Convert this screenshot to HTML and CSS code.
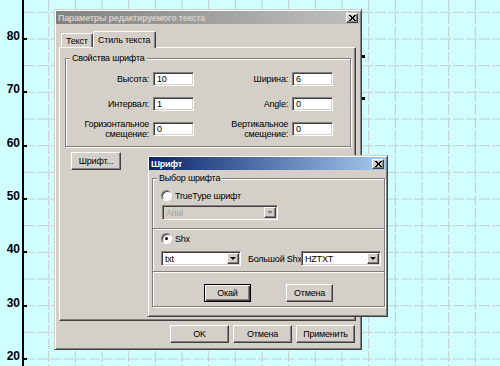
FILE: index.html
```
<!DOCTYPE html>
<html lang="ru">
<head>
    <meta charset="UTF-8">
    <title>Параметры редактируемого текста</title>
    <link rel="stylesheet" href="styles.css">
</head>
<body>

    <svg class="canvas" width="500" height="366">
        <g class="grid">
            <line x1="48.7" y1="0" x2="48.7" y2="366"/>
            <line x1="75.3" y1="0" x2="75.3" y2="366"/>
            <line x1="102" y1="0" x2="102" y2="366"/>
            <line x1="128.7" y1="0" x2="128.7" y2="366"/>
            <line x1="155.3" y1="0" x2="155.3" y2="366"/>
            <line x1="182" y1="0" x2="182" y2="366"/>
            <line x1="208.7" y1="0" x2="208.7" y2="366"/>
            <line x1="235.3" y1="0" x2="235.3" y2="366"/>
            <line x1="262" y1="0" x2="262" y2="366"/>
            <line x1="288.7" y1="0" x2="288.7" y2="366"/>
            <line x1="315.3" y1="0" x2="315.3" y2="366"/>
            <line x1="342" y1="0" x2="342" y2="366"/>
            <line x1="368.7" y1="0" x2="368.7" y2="366"/>
            <line x1="395.3" y1="0" x2="395.3" y2="366"/>
            <line x1="422" y1="0" x2="422" y2="366"/>
            <line x1="448.7" y1="0" x2="448.7" y2="366"/>
            <line x1="475.3" y1="0" x2="475.3" y2="366"/>
            <line x1="24" y1="12.3" x2="500" y2="12.3"/>
            <line x1="24" y1="39" x2="500" y2="39"/>
            <line x1="24" y1="65.7" x2="500" y2="65.7"/>
            <line x1="24" y1="92.3" x2="500" y2="92.3"/>
            <line x1="24" y1="119" x2="500" y2="119"/>
            <line x1="24" y1="145.7" x2="500" y2="145.7"/>
            <line x1="24" y1="172.3" x2="500" y2="172.3"/>
            <line x1="24" y1="199" x2="500" y2="199"/>
            <line x1="24" y1="225.7" x2="500" y2="225.7"/>
            <line x1="24" y1="252.3" x2="500" y2="252.3"/>
            <line x1="24" y1="279" x2="500" y2="279"/>
            <line x1="24" y1="305.7" x2="500" y2="305.7"/>
            <line x1="24" y1="332.3" x2="500" y2="332.3"/>
            <line x1="24" y1="359" x2="500" y2="359"/>
        </g>
        <rect class="axis" x="22" y="0" width="2" height="366"/>
        <g class="ticks">
            <rect x="24" y="38" width="3" height="2"/>
            <rect x="24" y="91" width="3" height="2"/>
            <rect x="24" y="145" width="3" height="2"/>
            <rect x="24" y="198" width="3" height="2"/>
            <rect x="24" y="251" width="3" height="2"/>
            <rect x="24" y="305" width="3" height="2"/>
            <rect x="24" y="358" width="3" height="2"/>
        </g>
        <g class="ylabels">
            <text x="20" y="40">80</text>
            <text x="20" y="93">70</text>
            <text x="20" y="147">60</text>
            <text x="20" y="200">50</text>
            <text x="20" y="253">40</text>
            <text x="20" y="307">30</text>
            <text x="20" y="360">20</text>
        </g>
        <rect x="362" y="55" width="3" height="3"/>
        <rect x="362" y="97" width="3" height="3"/>
    </svg>

    <div class="win main-win">
        <div class="titlebar inactive">
            <span class="title">Параметры редактируемого текста</span>
            <span class="close">
                <svg width="7" height="6" viewBox="0 0 7 6"><path d="M0 0 L6 6 M1 0 L7 6 M6 0 L0 6 M7 0 L1 6"/></svg>
            </span>
        </div>
        <div class="win-body">
            <div class="tabs">
                <div class="tab">Текст</div>
                <div class="tab active">Стиль текста</div>
            </div>
            <div class="panel">
                <div class="group props">
                    <div class="group-label">Свойства шрифта</div>
                    <div class="field-grid">
                        <label>Высота:</label><div class="edit">10</div>
                        <label>Ширина:</label><div class="edit">6</div>
                        <label>Интервал:</label><div class="edit">1</div>
                        <label>Angle:</label><div class="edit">0</div>
                        <label class="two-line">Горизонтальное<br>смещение:</label><div class="edit">0</div>
                        <label class="two-line">Вертикальное<br>смещение:</label><div class="edit">0</div>
                    </div>
                </div>
                <div class="btn font-btn">Шрифт...</div>
            </div>
            <div class="btn-row">
                <div class="btn">OK</div>
                <div class="btn">Отмена</div>
                <div class="btn">Применить</div>
            </div>
        </div>
    </div>

    <div class="win font-win">
        <div class="titlebar active">
            <span class="title">Шрифт</span>
            <span class="close">
                <svg width="7" height="6" viewBox="0 0 7 6"><path d="M0 0 L6 6 M1 0 L7 6 M6 0 L0 6 M7 0 L1 6"/></svg>
            </span>
        </div>
        <div class="font-body">
            <div class="group choose">
                <div class="group-label">Выбор шрифта</div>
                <div class="radio-row first">
                    <span class="radio"></span>TrueType шрифт
                </div>
                <div class="combo disabled wide">
                    <span class="combo-text">Arial</span>
                    <span class="drop"><span class="arrow"></span></span>
                </div>
                <div class="sep"></div>
                <div class="radio-row">
                    <span class="radio checked"></span>Shx
                </div>
                <div class="shx-row">
                    <div class="combo">
                        <span class="combo-text">txt</span>
                        <span class="drop"><span class="arrow"></span></span>
                    </div>
                    <span class="shx-label">Большой Shx</span>
                    <div class="combo">
                        <span class="combo-text">HZTXT</span>
                        <span class="drop"><span class="arrow"></span></span>
                    </div>
                </div>
                <div class="sep"></div>
                <div class="dlg-buttons">
                    <div class="btn default">Окай</div>
                    <div class="btn">Отмена</div>
                </div>
            </div>
        </div>
    </div>

</body>
</html>
```

FILE: styles.css
```
body {
    margin: 0;
    width: 500px;
    height: 366px;
    overflow: hidden;
    position: relative;
    background-color: #d0ffff;
    font-family: "Liberation Sans", Arial, sans-serif;
    font-size: 9px;
    letter-spacing: -0.2px;
    color: #000;
}
.canvas {
    position: absolute;
    left: 0;
    top: 0;
}
.grid line {
    stroke: #c4cccc;
    stroke-width: 1;
    stroke-dasharray: 11 2;
}
.ylabels text {
    font-family: "Liberation Sans", Arial, sans-serif;
    font-weight: bold;
    font-size: 12px;
    letter-spacing: 0;
    text-anchor: end;
}

/* classic windows */
.win {
    position: absolute;
    box-sizing: border-box;
    background: #d4d0c8;
    border: 1px solid;
    border-color: #d4d0c8 #404040 #404040 #d4d0c8;
    box-shadow: inset 1px 1px #fff, inset -1px -1px #808080;
    padding: 1px;
}
.main-win {
    left: 54px;
    top: 9px;
    width: 308px;
    height: 341px;
}
.font-win {
    left: 147px;
    top: 155px;
    width: 241px;
    height: 162px;
}
.titlebar {
    height: 13px;
    display: flex;
    align-items: center;
    justify-content: space-between;
    padding: 0 2px 0 2px;
}
.titlebar.inactive {
    background: linear-gradient(to right, #808080, #c0c0c0);
    color: #d4d0c8;
}
.titlebar.active {
    background: linear-gradient(to right, #0a246a, #a6caf0);
    color: #fff;
}
.title {
    font-weight: bold;
    font-size: 9px;
    letter-spacing: -0.3px;
    white-space: nowrap;
}
.close {
    width: 12px;
    height: 10px;
    box-sizing: border-box;
    background: #d4d0c8;
    border: 1px solid;
    border-color: #fff #404040 #404040 #fff;
    box-shadow: inset -1px -1px #808080;
    display: flex;
    align-items: center;
    justify-content: center;
}
.close path {
    stroke: #000;
    stroke-width: 1;
}

.btn {
    box-sizing: border-box;
    height: 18px;
    background: #d4d0c8;
    border: 1px solid;
    border-color: #fff #404040 #404040 #fff;
    box-shadow: inset -1px -1px #808080;
    display: flex;
    align-items: center;
    justify-content: center;
    white-space: nowrap;
}
.btn.default {
    border: 1px solid #000;
    box-shadow: inset 1px 1px #fff, inset -1px -1px #404040, inset -2px -2px #808080;
}

/* main dialog */
.win-body {
    padding: 7px 4px 0 3px;
}
.tabs {
    display: flex;
    align-items: flex-end;
    height: 16px;
    margin-left: 2px;
}
.tab {
    box-sizing: border-box;
    height: 14px;
    padding: 0 4px;
    border: 1px solid;
    border-bottom: none;
    border-color: #fff #404040 #404040 #fff;
    box-shadow: inset -1px 0 #808080;
    border-radius: 2px 2px 0 0;
    display: flex;
    align-items: center;
    white-space: nowrap;
}
.tab.active {
    height: 17px;
    margin-bottom: -1px;
    background: #d4d0c8;
    position: relative;
    z-index: 1;
    width: 63px;
    justify-content: center;
}
.panel {
    box-sizing: border-box;
    height: 274px;
    border: 1px solid;
    border-color: #fff #404040 #404040 #fff;
    box-shadow: inset -1px -1px #808080;
    padding: 0 4px 0 5px;
}
.group {
    position: relative;
    border: 1px solid #808080;
    box-shadow: 1px 1px #fff, inset 1px 1px #fff;
}
.group-label {
    position: absolute;
    top: -7px;
    left: 4px;
    padding: 0 2px;
    background: #d4d0c8;
    line-height: 12px;
}
.props {
    margin-top: 10px;
    padding: 13px 0 10px 0;
}
.field-grid {
    display: grid;
    grid-template-columns: 83px 41px 90px 41px;
    grid-auto-rows: 14px;
    column-gap: 4px;
    row-gap: 11px;
}
.field-grid label {
    text-align: right;
    align-self: center;
    white-space: nowrap;
}
.field-grid label.two-line {
    line-height: 10px;
    align-self: end;
    margin-bottom: -3px;
}
.edit {
    box-sizing: border-box;
    height: 14px;
    background: #fff;
    border: 1px solid;
    border-color: #808080 #fff #fff #808080;
    box-shadow: inset 1px 1px #404040, inset -1px -1px #d4d0c8;
    padding-left: 3px;
    line-height: 12px;
}
.font-btn {
    width: 50px;
    margin: 5px 0 0 6px;
}
.btn-row {
    display: flex;
    justify-content: flex-end;
    gap: 4px;
    margin-top: 4px;
    padding-right: 1px;
}
.btn-row .btn {
    width: 59px;
}

/* font dialog */
.font-body {
    padding: 8px 1px 0 3px;
}
.choose {
    height: 129px;
    box-sizing: border-box;
}
.radio-row {
    height: 13px;
    display: flex;
    align-items: center;
    gap: 3px;
    padding-left: 8px;
}
.radio-row.first {
    margin-top: 10px;
}
.radio {
    width: 11px;
    height: 11px;
    box-sizing: border-box;
    border-radius: 50%;
    background: #fff;
    border: 1px solid;
    border-color: #808080 #fff #fff #808080;
    box-shadow: inset 1px 1px #404040;
    display: flex;
    align-items: center;
    justify-content: center;
}
.radio.checked::after {
    content: "";
    width: 3px;
    height: 3px;
    border-radius: 50%;
    background: #000;
}
.combo {
    box-sizing: border-box;
    width: 80px;
    height: 15px;
    background: #fff;
    border: 1px solid;
    border-color: #808080 #fff #fff #808080;
    box-shadow: inset 1px 1px #404040, inset -1px -1px #d4d0c8;
    display: flex;
    align-items: center;
    justify-content: space-between;
    padding: 1px;
}
.combo.wide {
    width: 116px;
    margin: 3px 0 0 9px;
}
.combo.disabled {
    background: #d4d0c8;
    color: #a0a0a0;
}
.combo-text {
    padding-left: 2px;
}
.drop {
    box-sizing: border-box;
    width: 12px;
    height: 11px;
    background: #d4d0c8;
    border: 1px solid;
    border-color: #fff #404040 #404040 #fff;
    box-shadow: inset -1px -1px #808080;
    display: flex;
    align-items: center;
    justify-content: center;
}
.arrow {
    width: 0;
    height: 0;
    border-left: 3px solid transparent;
    border-right: 3px solid transparent;
    border-top: 3px solid #000;
}
.disabled .arrow {
    border-top-color: #808080;
}
.sep {
    border-top: 1px solid #808080;
    border-bottom: 1px solid #fff;
    height: 0;
    margin-top: 8px;
}
.sep + .radio-row {
    margin-top: 2px;
}
.shx-row {
    display: flex;
    align-items: center;
    margin-top: 6px;
    padding-left: 8px;
}
.shx-label {
    margin: 0 3px 0 7px;
    width: 50px;
    white-space: nowrap;
}
.shx-row + .sep {
    margin-top: 5px;
}
.dlg-buttons {
    display: flex;
    justify-content: center;
    gap: 35px;
    margin-top: 11px;
}
.dlg-buttons .btn {
    width: 47px;
}
```
